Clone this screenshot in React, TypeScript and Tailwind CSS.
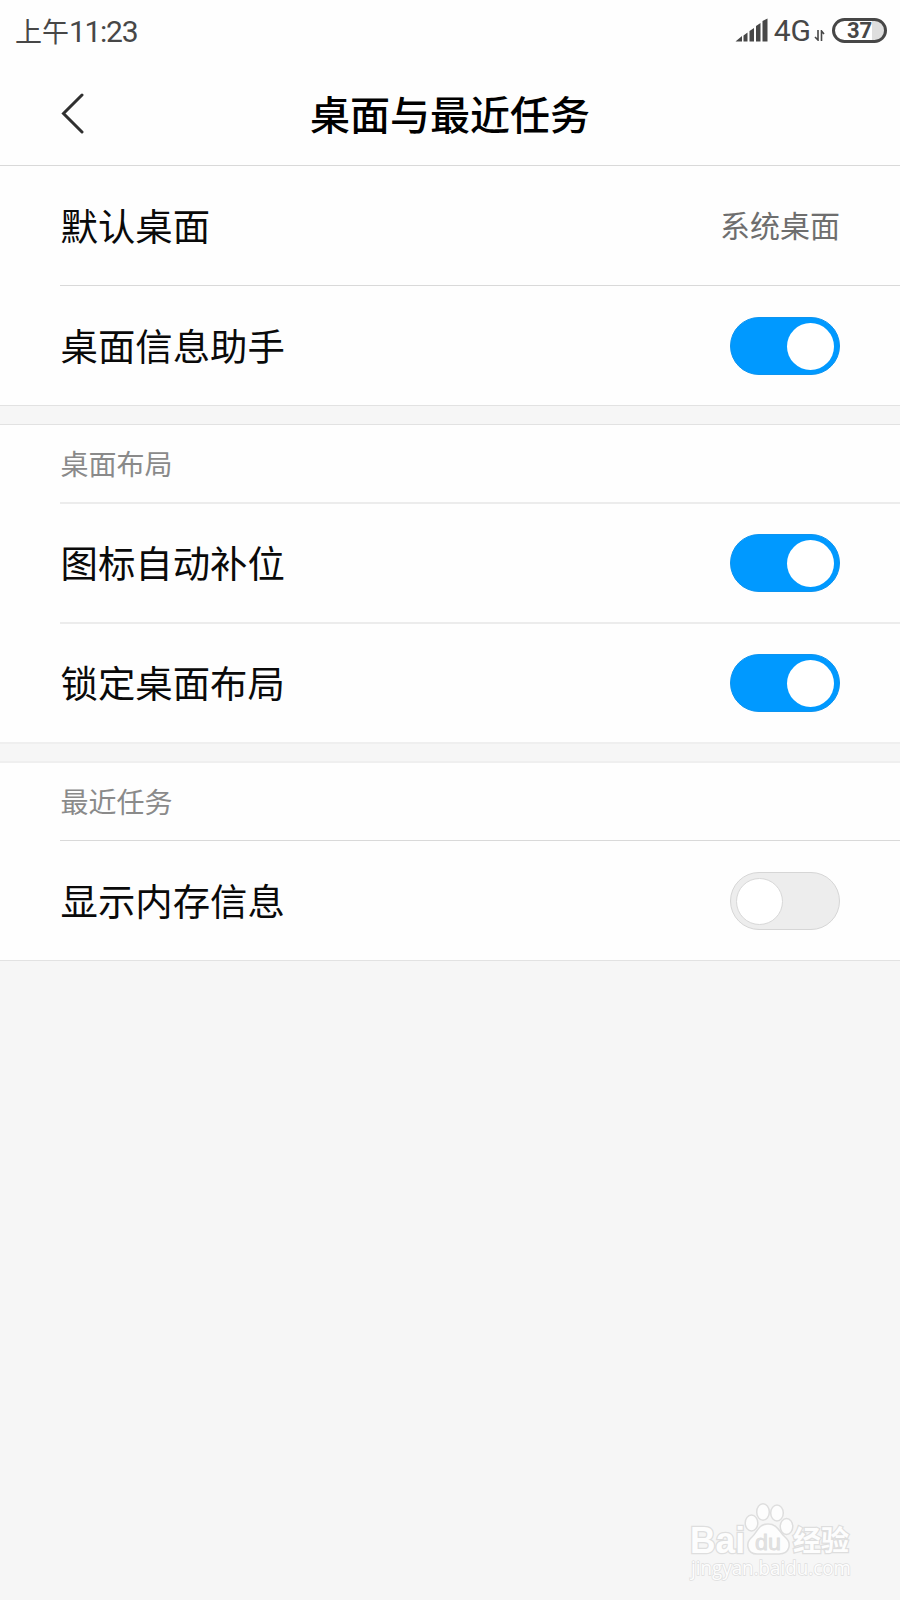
import clsx from 'clsx'

interface ToggleProps {
  checked: boolean
}

interface RowProps {
  label: string
  value?: string
  checked?: boolean
  divider?: 'thin' | 'soft' | 'none'
}

const dividerClasses = {
  thin: 'border-b border-[#d9d9d9]',
  soft: 'border-b-2 border-[#ececec]',
  none: '',
}

const Toggle = ({ checked }: ToggleProps) => (
  <button
    role="switch"
    aria-checked={checked}
    className={clsx(
      'flex h-[58px] w-[110px] items-center rounded-full border',
      checked
        ? 'justify-end border-[#0d94f0] bg-[#0099ff] pr-[5px]'
        : 'justify-start border-[#d6d6d6] bg-[#ededed] pl-[5px]'
    )}
  >
    <span
      className={clsx(
        'size-[47px] rounded-full bg-white',
        !checked && 'border border-[#d8d8d8]'
      )}
    />
  </button>
)

const Row = ({ label, value, checked, divider = 'none' }: RowProps) => (
  <div className={clsx('ml-[60px] flex h-[120px] items-center justify-between pr-[60px] pl-[0.5px]', dividerClasses[divider])}>
    <span className="text-[37.4px] leading-none text-[#0a0a0a]">{label}</span>
    {value && <span className="pb-[3px] text-[30px] leading-none text-[#6e6e6e]">{value}</span>}
    {checked !== undefined && <Toggle checked={checked} />}
  </div>
)

const StatusBar = () => (
  <div className="flex h-[60px] items-center justify-between pr-[13px] pl-[15px] text-[#474747]">
    <div className="flex items-center pt-[3px] leading-none">
      <span className="pb-[3px] text-[27px]">上午</span>
      <span className="font-[Roboto] text-[30px] tracking-[-1.3px]">11:23</span>
    </div>
    <div className="flex items-center">
      <svg width="33" height="25" viewBox="0 0 33 25" fill="currentColor">
        <path d="M.5 23.500L7 18V23.500ZM8.500 17.500L12.500 14.500V23.500H8.500ZM14.500 13L19 10V23.500H14.500ZM21 8L25.500 5V23.500H21ZM27.500 3L32.500 .5V23.500H27.500Z" />
      </svg>
      <span className="ml-1.5 pt-px font-[Roboto] text-[30px] leading-none">4G</span>
      <svg className="mt-2.5 ml-[3px]" width="11" height="11" viewBox="0 0 11 11" fill="none" stroke="currentColor" strokeWidth="1.6">
        <path d="M4 0V10L1 7M7.500 11V1l2.500 3" />
      </svg>
      <div className="ml-[7px] flex h-[25px] w-[55px] items-center justify-center rounded-full border-[3px] border-[#474747] bg-[linear-gradient(90deg,#fff_37px,#dedede_37px)] bg-clip-padding">
        <span className="pt-px font-[Roboto] text-[22px] leading-[22px] font-bold">37</span>
      </div>
    </div>
  </div>
)

const Header = () => (
  <header className="grid h-[106px] grid-cols-[1fr_auto_1fr] items-center border-b border-[#d9d9d9]">
    <button className="ml-[61px] w-fit" aria-label="返回">
      <svg width="24" height="42" viewBox="0 0 24 42" fill="none" stroke="#303030" strokeWidth="3" strokeLinecap="round">
        <path d="M21 3L2.500 21.500L21 40" />
      </svg>
    </button>
    <h1 className="text-[40px] leading-none font-medium text-black">桌面与最近任务</h1>
  </header>
)

const Watermark = () => (
  <svg
    className="absolute right-0 bottom-0"
    width="220"
    height="110"
    viewBox="0 0 220 110"
    fill="#fdfdfd"
    stroke="#dedede"
    strokeWidth="1.5"
  >
    <g fontFamily="Liberation Sans, sans-serif" fontWeight="700" paintOrder="stroke">
      <text x="10" y="63" fontSize="36" textLength="55" lengthAdjust="spacingAndGlyphs" strokeWidth="2.5">Bai</text>
      <text x="113" y="61" fontSize="28" fontFamily="Noto Sans CJK SC, sans-serif" fontWeight="700" strokeWidth="2.5">经验</text>
      <text x="11" y="85" fontSize="20" fontFamily="Open Sans, sans-serif" fontWeight="400" textLength="160" lengthAdjust="spacingAndGlyphs">jingyan.baidu.com</text>
    </g>
    <ellipse cx="71.500" cy="33" rx="6.300" ry="8" />
    <ellipse cx="83" cy="22" rx="6.300" ry="8.300" />
    <ellipse cx="97" cy="23" rx="6.300" ry="8" />
    <ellipse cx="106.500" cy="36.500" rx="6.300" ry="8" />
    <path d="M88 34C78 34 77 43 72 47C65 53 67 64 77 64H99C110 64 112 53 105 47C99 42 98 34 88 34Z" />
    <text x="75" y="60" fontSize="22" fontFamily="Liberation Sans, sans-serif" textLength="26" lengthAdjust="spacingAndGlyphs" fill="#e2e2e2" strokeWidth="0.8">du</text>
  </svg>
)

export default function App() {
  return (
    <div className="relative h-[1600px] w-[900px] overflow-hidden bg-[#f6f6f6] font-['Noto_Sans_CJK_SC',sans-serif]">
      <div className="bg-[#fefefe]">
        <StatusBar />
        <Header />
      </div>
      <section className="border-b border-[#e2e2e2] bg-[#fefefe]">
        <Row label="默认桌面" value="系统桌面" divider="thin" />
        <div className="-mb-px">
          <Row label="桌面信息助手" checked />
        </div>
      </section>
      <section className="mt-[18px] border-t border-b-2 border-t-[#e2e2e2] border-b-[#efefef] bg-[#fefefe]">
        <h2 className="ml-[60px] flex h-[79px] items-center border-b-2 border-[#ececec] pb-0.5 pl-[0.5px] text-[28px] leading-none text-[#8a8a8a]">
          桌面布局
        </h2>
        <Row label="图标自动补位" checked divider="soft" />
        <div className="-mt-px -mb-px">
          <Row label="锁定桌面布局" checked />
        </div>
      </section>
      <section className="mt-[17px] border-t-2 border-b border-t-[#efefef] border-b-[#e2e2e2] bg-[#fefefe]">
        <h2 className="ml-[60px] flex h-[78px] items-center border-b border-[#d9d9d9] pb-0.5 pl-[0.5px] text-[28px] leading-none text-[#8a8a8a]">
          最近任务
        </h2>
        <div className="-mb-px">
          <Row label="显示内存信息" checked={false} />
        </div>
      </section>
      <Watermark />
    </div>
  )
}
